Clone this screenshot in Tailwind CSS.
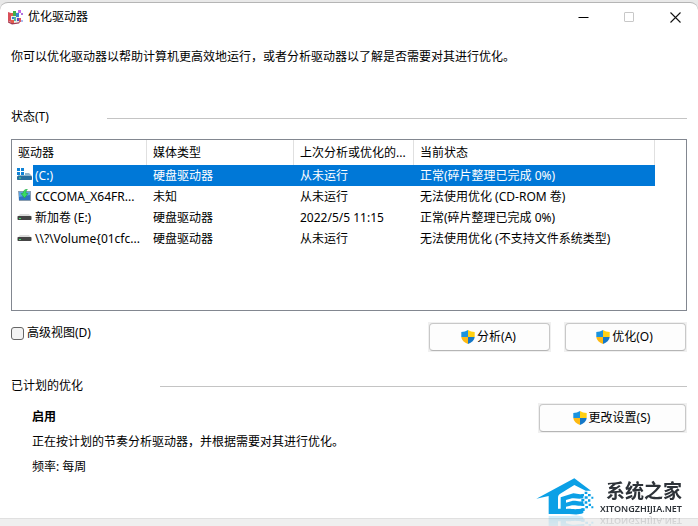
<!DOCTYPE html>
<html lang="zh-CN">
<head>
  <meta charset="UTF-8">
  <meta name="viewport" content="width=device-width, initial-scale=1.0">
  <title>优化驱动器</title>
  <script src="https://cdn.jsdelivr.net/npm/@tailwindcss/browser@4"></script>
</head>
<body class="bg-[#e9e9e9] text-black text-[12px] leading-[18px] font-['Noto_Sans','Noto_Sans_CJK_SC',sans-serif]">
  <!-- Shared icons -->
  <svg class="hidden" aria-hidden="true">
    <symbol id="shield" viewBox="0 0 14 14">
      <path fill="#1b93dd" d="M7 0C5.200 1.200 2.800 1.900.3 2v5H7z"/>
      <path fill="#ffd013" d="M7 0c1.800 1.200 4.200 1.900 6.700 2v5H7z"/>
      <path fill="#fdb913" d="M.3 7c.3 3.300 3 5.600 6.700 7V7z"/>
      <path fill="#1478c8" d="M13.700 7c-.3 3.300-3 5.600-6.700 7V7z"/>
    </symbol>
    <symbol id="disk" viewBox="0 0 15 15">
      <path fill="#dcdcdc" d="M3 4h9l2.500 3H.5z"/>
      <rect x=".5" y="6" width="14" height="4" rx=".8" fill="#444"/>
      <rect x="2" y="8" width="2" height="1" fill="#3ee06a"/>
    </symbol>
  </svg>

  <div class="min-h-screen flex flex-col pt-0.5">
    <main class="flex-1 flex flex-col bg-white border-t border-[#b5b5b5] rounded-t-lg">
      <!-- Title bar -->
      <header class="flex items-center h-7 pl-2">
        <svg class="size-4 mr-1" viewBox="0 0 16 16">
          <path fill="#d8505a" d="M0 3l3 1v9l-3-1z"/>
          <path fill="#a33a50" d="M0 12l4 2 8-1-1 1.500-7 1-4-2z"/>
          <path fill="#e8efe8" d="M3 4l8-1v10l-8 1z"/>
          <path fill="#e25c4c" d="M3 4h2v3H3zM3 11h3v3H3z"/>
          <path fill="#3fae49" d="M5 2h3v5H5z"/>
          <path fill="#3b7fd4" d="M8 4h3v4H8zM4 8h2v2H4z"/>
          <path fill="#52b8a0" d="M6 8h2v4H6z"/>
          <path fill="#5b4bc4" d="M9 9h2v3H9z"/>
          <path fill="#c06be8" d="M10 1h3v3h-3z"/>
          <path fill="#b070e0" d="M13 4h2v2h-2z"/>
          <path fill="#e05560" d="M11 9h2v4h-2z"/>
          <path fill="#a9bdf0" d="M13 11h2v2h-2z"/>
        </svg>
        <h1 class="flex-1">优化驱动器</h1>
        <button aria-label="最小化" class="w-[46px] h-7 flex items-center justify-center">
          <svg class="size-[11px]" viewBox="0 0 11 11"><path d="M.5 5.500h10" stroke="#000"/></svg>
        </button>
        <button aria-label="最大化" disabled class="w-[46px] h-7 flex items-center justify-center">
          <svg class="size-[11px]" viewBox="0 0 11 11"><rect x=".5" y=".5" width="9" height="9" rx=".5" fill="none" stroke="#c8c8c8"/></svg>
        </button>
        <button aria-label="关闭" class="w-[46px] h-7 flex items-center justify-center">
          <svg class="size-[11px]" viewBox="0 0 11 11"><path d="M.5.5l10 10M10.500.5l-10 10" stroke="#111" stroke-width="1.100"/></svg>
        </button>
      </header>

      <div class="px-[11px] pt-[17px]">
        <p>你可以优化驱动器以帮助计算机更高效地运行，或者分析驱动器以了解是否需要对其进行优化。</p>

        <!-- Status -->
        <div class="mt-[42px] flex items-center">
          <h2 class="w-24">状态(T)</h2>
          <div class="flex-1 h-px mt-0.5 bg-[#c4c4c4]"></div>
        </div>

        <div class="mt-[13px] min-h-[172px] border border-[#828790] overflow-hidden">
          <table class="table-fixed w-[643px] border-collapse text-left whitespace-nowrap">
            <colgroup>
              <col class="w-[135px]">
              <col class="w-[147px]">
              <col class="w-[120px]">
              <col class="w-[241px]">
            </colgroup>
            <thead>
              <tr class="h-[25px]">
                <th class="p-0 font-normal"><div class="h-[25px] pl-1.5 flex items-center border-r border-[#e0e0e0]">驱动器</div></th>
                <th class="p-0 font-normal"><div class="h-[25px] pl-1.5 flex items-center border-r border-[#e0e0e0]">媒体类型</div></th>
                <th class="p-0 font-normal"><div class="h-[25px] pl-1.5 flex items-center border-r border-[#e0e0e0]">上次分析或优化的...</div></th>
                <th class="p-0 font-normal"><div class="h-[25px] pl-1.5 flex items-center border-r border-[#e0e0e0]">当前状态</div></th>
              </tr>
            </thead>
            <tbody>
              <tr class="h-[21px] text-white">
                <td class="p-0">
                  <div class="flex items-center h-[21px]">
                    <svg class="size-[15px] ml-[5px] mr-px" viewBox="0 0 15 15">
                      <path fill="#0f82d6" d="M0 0h3v3H0zM4 0h3v3H4zM0 4h3v3H0zM4 4h3v3H4z"/>
                      <path fill="#8fb4cc" d="M8 5h4l3 3H1V7h7z"/>
                      <rect y="8" width="15" height="4" rx=".8" fill="#2a6f9e"/>
                      <rect x="2" y="9.500" width="2" height="1" fill="#4be38a"/>
                    </svg>
                    <span class="flex-1 h-[21px] pl-0.5 flex items-center bg-[#0078d7]">(C:)</span>
                  </div>
                </td>
                <td class="p-0 pl-1.5 bg-[#0078d7]">硬盘驱动器</td>
                <td class="p-0 pl-1.5 bg-[#0078d7]">从未运行</td>
                <td class="p-0 pl-1.5 bg-[#0078d7]">正常(碎片整理已完成 0%)</td>
              </tr>
              <tr class="h-[21px]">
                <td class="p-0">
                  <div class="flex items-center h-[21px]">
                    <svg class="size-[15px] ml-[5px] mr-px" viewBox="0 0 15 15">
                      <path fill="#8a9db0" d="M1 2h13v10H2z"/>
                      <path fill="#5aa4e4" d="M2 3h11v8H2z"/>
                      <path fill="#2f74c0" d="M2 8l11-2v5H2z"/>
                      <path fill="#3bdc62" stroke="#1a9a3c" stroke-width=".5" d="M10.500 0C7.500.3 6 2 6 4.500H4L7.500 9 11 4.500H9C8.800 2.500 9.300 1.200 10.500 0z"/>
                    </svg>
                    <span class="flex-1 pl-0.5">CCCOMA_X64FR...</span>
                  </div>
                </td>
                <td class="p-0 pl-1.5">未知</td>
                <td class="p-0 pl-1.5">从未运行</td>
                <td class="p-0 pl-1.5">无法使用优化 (CD-ROM 卷)</td>
              </tr>
              <tr class="h-[21px]">
                <td class="p-0">
                  <div class="flex items-center h-[21px]">
                    <svg class="size-[15px] ml-[5px] mr-px"><use href="#disk"/></svg>
                    <span class="flex-1 pl-0.5">新加卷 (E:)</span>
                  </div>
                </td>
                <td class="p-0 pl-1.5">硬盘驱动器</td>
                <td class="p-0 pl-1.5">2022/5/5 11:15</td>
                <td class="p-0 pl-1.5">正常(碎片整理已完成 0%)</td>
              </tr>
              <tr class="h-[21px]">
                <td class="p-0">
                  <div class="flex items-center h-[21px]">
                    <svg class="size-[15px] ml-[5px] mr-px"><use href="#disk"/></svg>
                    <span class="flex-1 pl-0.5">\\?\Volume{01cfc...</span>
                  </div>
                </td>
                <td class="p-0 pl-1.5">硬盘驱动器</td>
                <td class="p-0 pl-1.5">从未运行</td>
                <td class="p-0 pl-1.5">无法使用优化 (不支持文件系统类型)</td>
              </tr>
            </tbody>
          </table>
        </div>

        <div class="mt-[11px] flex items-start">
          <label for="advanced" class="flex-1 flex items-center gap-[3px] pt-0.5">
            <input type="checkbox" id="advanced" class="appearance-none size-[13px] rounded-[3px] border border-[#666] bg-[#f3f3f3] checked:bg-[#0078d7]">
            高级视图(D)
          </label>
          <div class="flex gap-[13px]">
            <div class="p-px bg-[#f0f0f0]">
              <button class="w-[121px] h-7 flex items-center justify-center gap-0.5 pr-0.5 rounded border border-[#c8c8c8] border-b-[#b5b5b5] bg-[#fdfdfd] hover:bg-[#e5f1fb]">
                <svg class="size-[14px]"><use href="#shield"/></svg>分析(A)
              </button>
            </div>
            <div class="p-px bg-[#f0f0f0]">
              <button class="w-[121px] h-7 flex items-center justify-center gap-0.5 pr-0.5 rounded border border-[#c8c8c8] border-b-[#b5b5b5] bg-[#fdfdfd] hover:bg-[#e5f1fb]">
                <svg class="size-[14px]"><use href="#shield"/></svg>优化(O)
              </button>
            </div>
          </div>
        </div>

        <!-- Schedule -->
        <div class="mt-[25px] flex items-center">
          <h2 class="w-[149px]">已计划的优化</h2>
          <div class="flex-1 h-px bg-[#c4c4c4]"></div>
        </div>

        <div class="mt-2 flex items-start">
          <div class="flex-1 flex flex-col gap-[7px] pt-[5px] pl-[21px]">
            <p class="font-bold">启用</p>
            <p>正在按计划的节奏分析驱动器，并根据需要对其进行优化。</p>
            <p>频率: 每周</p>
          </div>
          <div class="p-px bg-[#f0f0f0]">
            <button class="w-[147px] h-7 flex items-center justify-center gap-0.5 pr-0.5 rounded border border-[#c8c8c8] border-b-[#b5b5b5] bg-[#fdfdfd] hover:bg-[#e5f1fb]">
              <svg class="size-[14px]"><use href="#shield"/></svg>更改设置(S)
            </button>
          </div>
        </div>
      </div>
    </main>
    <footer class="h-2 border-t border-[#e0e0e0] bg-[#efefef]"></footer>
  </div>

  <!-- Site mark -->
  <div class="fixed right-4 bottom-[11px] flex items-center gap-1 [-webkit-box-reflect:below_0px_linear-gradient(transparent_40%,#fff3)]">
    <svg class="w-[60px] h-[37px]" viewBox="6 12 180 111">
      <path fill="#0ba0e6" d="M7 74L121 13l50 37h-16l-34-17-40 25c-7 4-9 8-9 14v32h8V70l38-12c12 0 16 5 30 1v13c-14 5-22-1-34 1l-18 5v8l18-5c12-2 20 4 34 0v13c-14 4-20-1-34 0l-18 4v7c18-2 22 4 52-2v14c-14 6-26 4-42 3H44V66z"/>
      <path fill="#0ba0e6" d="M142 60h8v7h-8zM152 53h8v7h-8zM162 60h8v7h-8zM152 67h9v7h-9zM142 74h9v7h-9zM162 76h7v7h-7zM152 82h8v7h-8zM142 89h9v7h-9zM164 89h7v7h-7zM154 96h8v7h-8zM142 103h10v8h-10zM172 68h6v6h-6zM172 97h6v6h-6z"/>
    </svg>
    <div class="text-[#2d3238] text-right">
      <p class="text-[19px] leading-6 font-bold">系统之家</p>
      <p class="text-[9px] leading-3 font-semibold">XITONGZHIJIA.NET</p>
    </div>
  </div>
</body>
</html>
